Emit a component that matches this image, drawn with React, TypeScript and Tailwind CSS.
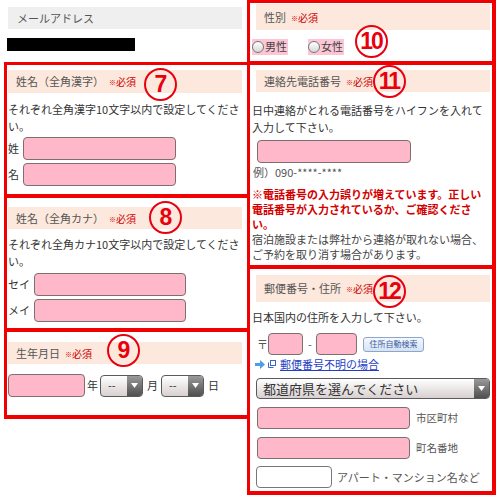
import React from "react";

const Req = () => (
  <span className="ml-[5px] text-[10px] text-[#d00000]">
    <span className="text-[7px] align-[1px]">※</span>必須
  </span>
);

const Circle = ({ n, cls }: { n: string; cls: string }) => (
  <div
    className={`absolute w-[33px] h-[33px] rounded-full border-[2.5px] border-[#e8000e] flex items-center justify-center text-[#e8000e] font-bold text-[23px] leading-none tracking-[-2px] font-['Liberation_Sans',sans-serif] ${cls}`}
  >
    <span className="-ml-[1px] -mt-[1px]">{n}</span>
  </div>
);

const Head = ({
  title,
  cls,
  children,
}: {
  title: string;
  cls: string;
  children?: React.ReactNode;
}) => (
  <div className={`relative bg-[#fce8dc] flex items-center pl-[8px] text-[11px] text-[#555] ${cls}`}>
    <span>{title}</span>
    <Req />
    {children}
  </div>
);

const Pink = ({ cls }: { cls: string }) => (
  <div className={`rounded-[4px] border border-[#7d6f70] bg-[#ffb8c9] ${cls}`} />
);

const Tri = () => (
  <svg width="7" height="5" viewBox="0 0 7 5">
    <polygon points="0,0 7,0 3.5,5" fill="#fff" />
  </svg>
);

const Sel = ({ text, cls, textCls }: { text: string; cls: string; textCls: string }) => (
  <div
    className={`flex rounded-[4px] border border-[#5a5a5a] overflow-hidden bg-gradient-to-b from-white to-[#d8d0d0] ${cls}`}
  >
    <div className={`flex-1 flex items-center text-[#333] ${textCls}`}>{text}</div>
    <div className="w-[15px] bg-gradient-to-b from-[#9a9a9a] to-[#505050] flex items-center justify-center">
      <Tri />
    </div>
  </div>
);

const Radio = ({ label }: { label: string }) => (
  <div className="flex items-center bg-[#fcc6d4] h-[16px] pr-[1px]">
    <span className="w-[12px] h-[12px] rounded-full border border-[#777] bg-gradient-to-b from-white to-[#d8d8d8] mr-[1px]" />
    <span className="text-[11px] text-[#444]">{label}</span>
  </div>
);

export default function App() {
  return (
    <div className="w-[500px] h-[498px] bg-white overflow-hidden flex font-['Noto_Sans_CJK_JP',sans-serif] [line-break:strict]">
      {/* Left column */}
      <div className="w-[247px] shrink-0">
        <div className="h-[62px] pt-[7px]">
          <div className="ml-[8px] w-[234px] h-[22px] bg-[#efefef] flex items-center pl-[9px] text-[11px] text-[#555]">
            メールアドレス
          </div>
          <div className="ml-[7px] mt-[9px] w-[128px] h-[13px] bg-black" />
        </div>

        {/* 7 */}
        <div className="ml-[4px] border-t-[3px] border-l-[3px] border-b-[4px] border-[#f00000] pl-[1px] pt-[5px] pb-[8px]">
          <Head title="姓名（全角漢字）" cls="w-[234px] h-[23px]">
            <Circle n="7" cls="left-[136px] top-[-2px]" />
          </Head>
          <p className="mt-[8px] text-[11px] leading-[17px] text-[#333]">
            それぞれ全角漢字10文字以内で設定してください。
          </p>
          <div className="mt-[2px] flex items-center">
            <span className="w-[15px] text-[11px] text-[#333]">姓</span>
            <Pink cls="w-[153px] h-[23px]" />
          </div>
          <div className="mt-[3px] flex items-center">
            <span className="w-[15px] text-[11px] text-[#333]">名</span>
            <Pink cls="w-[153px] h-[23px]" />
          </div>
        </div>

        {/* 8 */}
        <div className="ml-[4px] border-l-[3px] border-b-[4px] border-[#f00000] pl-[1px] pt-[9px] pb-[6px]">
          <Head title="姓名（全角カナ）" cls="w-[234px] h-[22px]">
            <Circle n="8" cls="left-[141px] top-[-6px]" />
          </Head>
          <p className="mt-[7px] text-[11px] leading-[17px] text-[#333]">
            それぞれ全角カナ10文字以内で設定してください。
          </p>
          <div className="mt-[3px] flex items-center">
            <span className="w-[26px] text-[11px] text-[#333]">セイ</span>
            <Pink cls="w-[152px] h-[23px]" />
          </div>
          <div className="mt-[3px] flex items-center">
            <span className="w-[26px] text-[11px] text-[#333]">メイ</span>
            <Pink cls="w-[152px] h-[23px]" />
          </div>
        </div>

        {/* 9 */}
        <div className="ml-[4px] border-l-[3px] border-b-[4px] border-[#f00000] pl-[1px] pt-[10px] pb-[18px]">
          <Head title="生年月日" cls="w-[234px] h-[22px]">
            <Circle n="9" cls="left-[99px] top-[-8px]" />
          </Head>
          <div className="mt-[10px] flex items-center text-[11px] text-[#333]">
            <Pink cls="w-[77px] h-[23px]" />
            <span className="ml-[2px]">年</span>
            <Sel text="--" cls="ml-[2px] w-[43px] h-[22px]" textCls="pl-[7px] text-[11px]" />
            <span className="ml-[4px]">月</span>
            <Sel text="--" cls="ml-[3px] w-[43px] h-[22px]" textCls="pl-[7px] text-[11px]" />
            <span className="ml-[4px]">日</span>
          </div>
        </div>
      </div>

      {/* Right column */}
      <div className="w-[249px] shrink-0">
        {/* 10 */}
        <div className="border-t-[3px] border-l-[3px] border-r-[4px] border-b-[4px] border-[#f00000] pt-[1px] pb-[6px]">
          <Head title="性別" cls="ml-[6px] w-[234px] h-[26px]">
            <Circle n="10" cls="left-[99px] top-[21px]" />
          </Head>
          <div className="mt-[8px] ml-[2px] flex items-center gap-[20px] h-[17px]">
            <Radio label="男性" />
            <Radio label="女性" />
          </div>
        </div>

        {/* 11 */}
        <div className="border-l-[3px] border-r-[4px] border-b-[4px] border-[#f00000] pt-[5px] pb-[3px]">
          <Head title="連絡先電話番号" cls="ml-[6px] w-[234px] h-[22px]">
            <Circle n="11" cls="left-[117px] top-[-5px]" />
          </Head>
          <p className="mt-[10px] pl-[2px] text-[11px] leading-[17px] text-[#333]">
            日中連絡がとれる電話番号をハイフンを入れて入力して下さい。
          </p>
          <Pink cls="mt-[4px] ml-[7px] w-[154px] h-[23px]" />
          <p className="mt-[2px] pl-[3px] text-[11px] leading-[15px] text-[#555]">
            例）090-****-****
          </p>
          <p className="mt-[7px] pl-[2px] text-[11px] leading-[15px] font-bold text-[#d40000]">
            ※電話番号の入力誤りが増えています。正しい電話番号が入力されているか、ご確認ください。
          </p>
          <p className="pl-[2px] text-[11px] leading-[15px] text-[#444]">
            宿泊施設または弊社から連絡が取れない場合、ご予約を取り消す場合があります。
          </p>
        </div>

        {/* 12 */}
        <div className="border-l-[3px] border-r-[4px] border-b-[4px] border-[#f00000] pt-[6px] pb-[3px]">
          <Head title="郵便番号・住所" cls="ml-[6px] w-[234px] h-[27px]">
            <Circle n="12" cls="left-[117px] top-[0px]" />
          </Head>
          <p className="mt-[7px] pl-[2px] text-[11px] leading-[17px] text-[#333]">
            日本国内の住所を入力して下さい。
          </p>
          <div className="mt-[7px] ml-[7px] flex items-center text-[11px] text-[#555]">
            <span className="w-[11px]">〒</span>
            <Pink cls="w-[35px] h-[22px]" />
            <span className="ml-[5px] w-[4px]">-</span>
            <Pink cls="ml-[4px] w-[41px] h-[22px]" />
            <div className="ml-[6px] w-[61px] h-[15px] rounded-[3px] border border-[#8ea6c8] bg-gradient-to-b from-[#f4f8ff] to-[#d6e3f5] flex items-center justify-center text-[8px] text-[#3c5d9c]">
              住所自動検索
            </div>
          </div>
          <div className="mt-[3px] ml-[5px] flex items-center h-[12px]">
            <svg width="10" height="9" viewBox="0 0 10 9">
              <polygon points="0,3 5,3 5,0 10,4.5 5,9 5,6 0,6" fill="#4a9fe6" />
            </svg>
            <svg className="ml-[3px]" width="8" height="8" viewBox="0 0 8 8">
              <rect x="2.5" y="0.5" width="5" height="5" fill="none" stroke="#3a66c4" strokeWidth="1" />
              <polyline points="0.5,2.5 0.5,7.5 5.5,7.5" fill="none" stroke="#3a66c4" strokeWidth="1" />
            </svg>
            <span className="ml-[4px] text-[11px] leading-[12px] text-[#1f3fc4] underline">郵便番号不明の場合</span>
          </div>
          <Sel text="都道府県を選んでください" cls="mt-[8px] ml-[6px] w-[234px] h-[21px]" textCls="pl-[6px] text-[13px]" />
          <div className="mt-[8px] ml-[7px] flex items-center">
            <Pink cls="w-[153px] h-[22px]" />
            <span className="ml-[6px] text-[10.5px] text-[#555]">市区町村</span>
          </div>
          <div className="mt-[8px] ml-[7px] flex items-center">
            <Pink cls="w-[153px] h-[22px]" />
            <span className="ml-[6px] text-[10.5px] text-[#555]">町名番地</span>
          </div>
          <div className="mt-[7px] ml-[6px] flex items-center">
            <div className="w-[76px] h-[22px] rounded-[4px] border border-[#777] bg-white" />
            <span className="ml-[5px] text-[11px] text-[#555]">アパート・マンション名など</span>
          </div>
        </div>
      </div>
    </div>
  );
}
